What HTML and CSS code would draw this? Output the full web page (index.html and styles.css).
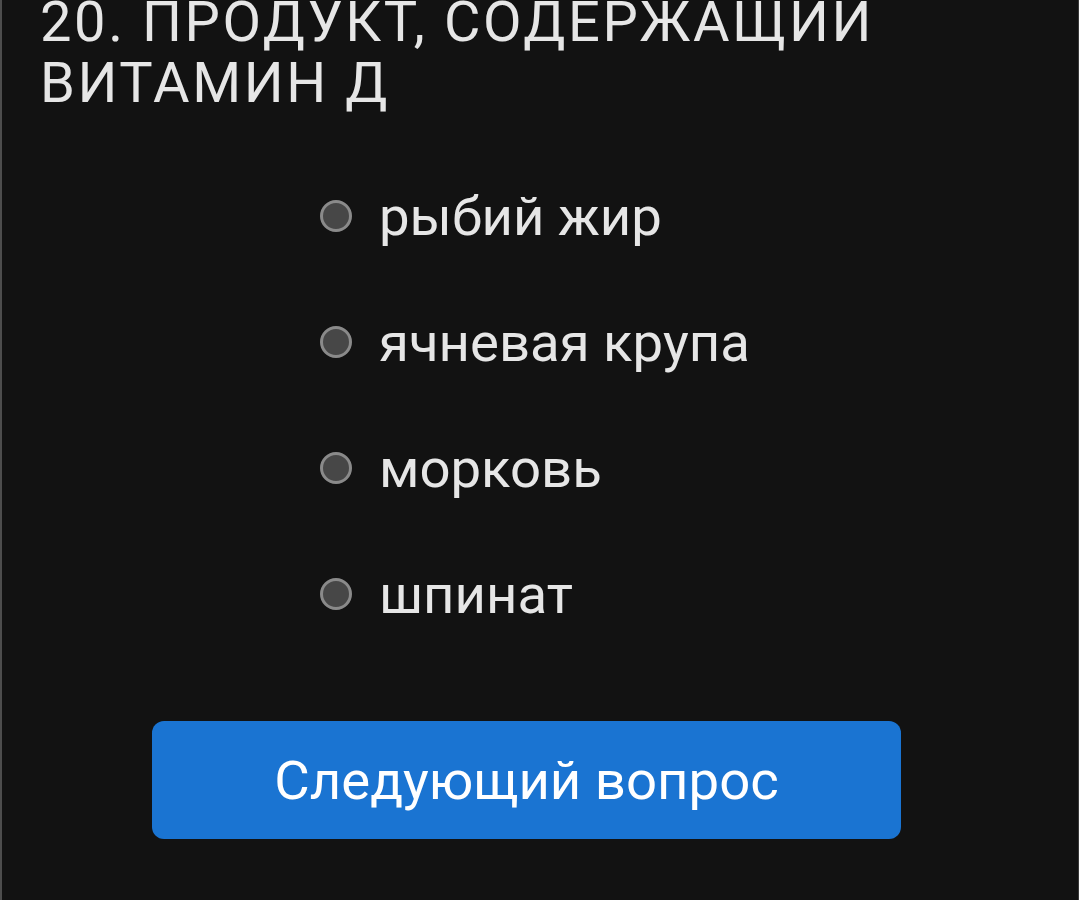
FILE: index.html
```html
<html>
<head>
<meta charset="utf-8">
<meta name="viewport" content="width=device-width, initial-scale=1.0">
<title>Тест</title>
<link rel="stylesheet" href="styles.css">
</head>
<body>
<div class='quiz'>
  <h2 class='question'>20. Продукт, содержащий витамин Д</h2>
  <div class='answers'>
    <label class='answer'><input type='radio' name='q20'><span>рыбий жир</span></label>
    <label class='answer'><input type='radio' name='q20'><span>ячневая крупа</span></label>
    <label class='answer'><input type='radio' name='q20'><span>морковь</span></label>
    <label class='answer'><input type='radio' name='q20'><span>шпинат</span></label>
  </div>
  <div class='actions'>
    <button type='button' class='next-button'>Следующий вопрос</button>
  </div>
</div>
</body>
</html>
```

FILE: styles.css
```css
html {
  box-sizing: border-box;
  background-color: #121212;
}
body {
  margin: 0;
  height: 900px;
  overflow: hidden;
  font-family: Roboto, "Noto Sans", sans-serif;
  color: #e6e6e6;
  border-left: 2px solid #4d4d4d;
  border-right: 1px solid #3a3a3a;
}
.quiz {
  padding: 0 0 0 38px;
}
.question {
  max-width: 940px;
  margin: -8px 0 0 0;
  font-size: 56px;
  font-weight: 400;
  letter-spacing: 2.6px;
  line-height: 61px;
  text-transform: uppercase;
}
.answers {
  display: flex;
  flex-direction: column;
  gap: 62px;
  margin: 70px 0 0 280px;
}
.answer {
  display: flex;
  align-items: center;
  gap: 27px;
  height: 64px;
  font-size: 54.5px;
}
.answer input {
  appearance: none;
  margin: 0;
  width: 32px;
  height: 32px;
  border-radius: 50%;
  border: 3px solid #8a8a8a;
  background: #474747;
}
.actions {
  margin: 95px 0 0 112px;
}
.next-button {
  width: 749px;
  height: 118px;
  border: none;
  border-radius: 12px;
  background: #1a74d2;
  color: #fff;
  font-family: Roboto, "Noto Sans", sans-serif;
  font-size: 54.5px;
}
```
